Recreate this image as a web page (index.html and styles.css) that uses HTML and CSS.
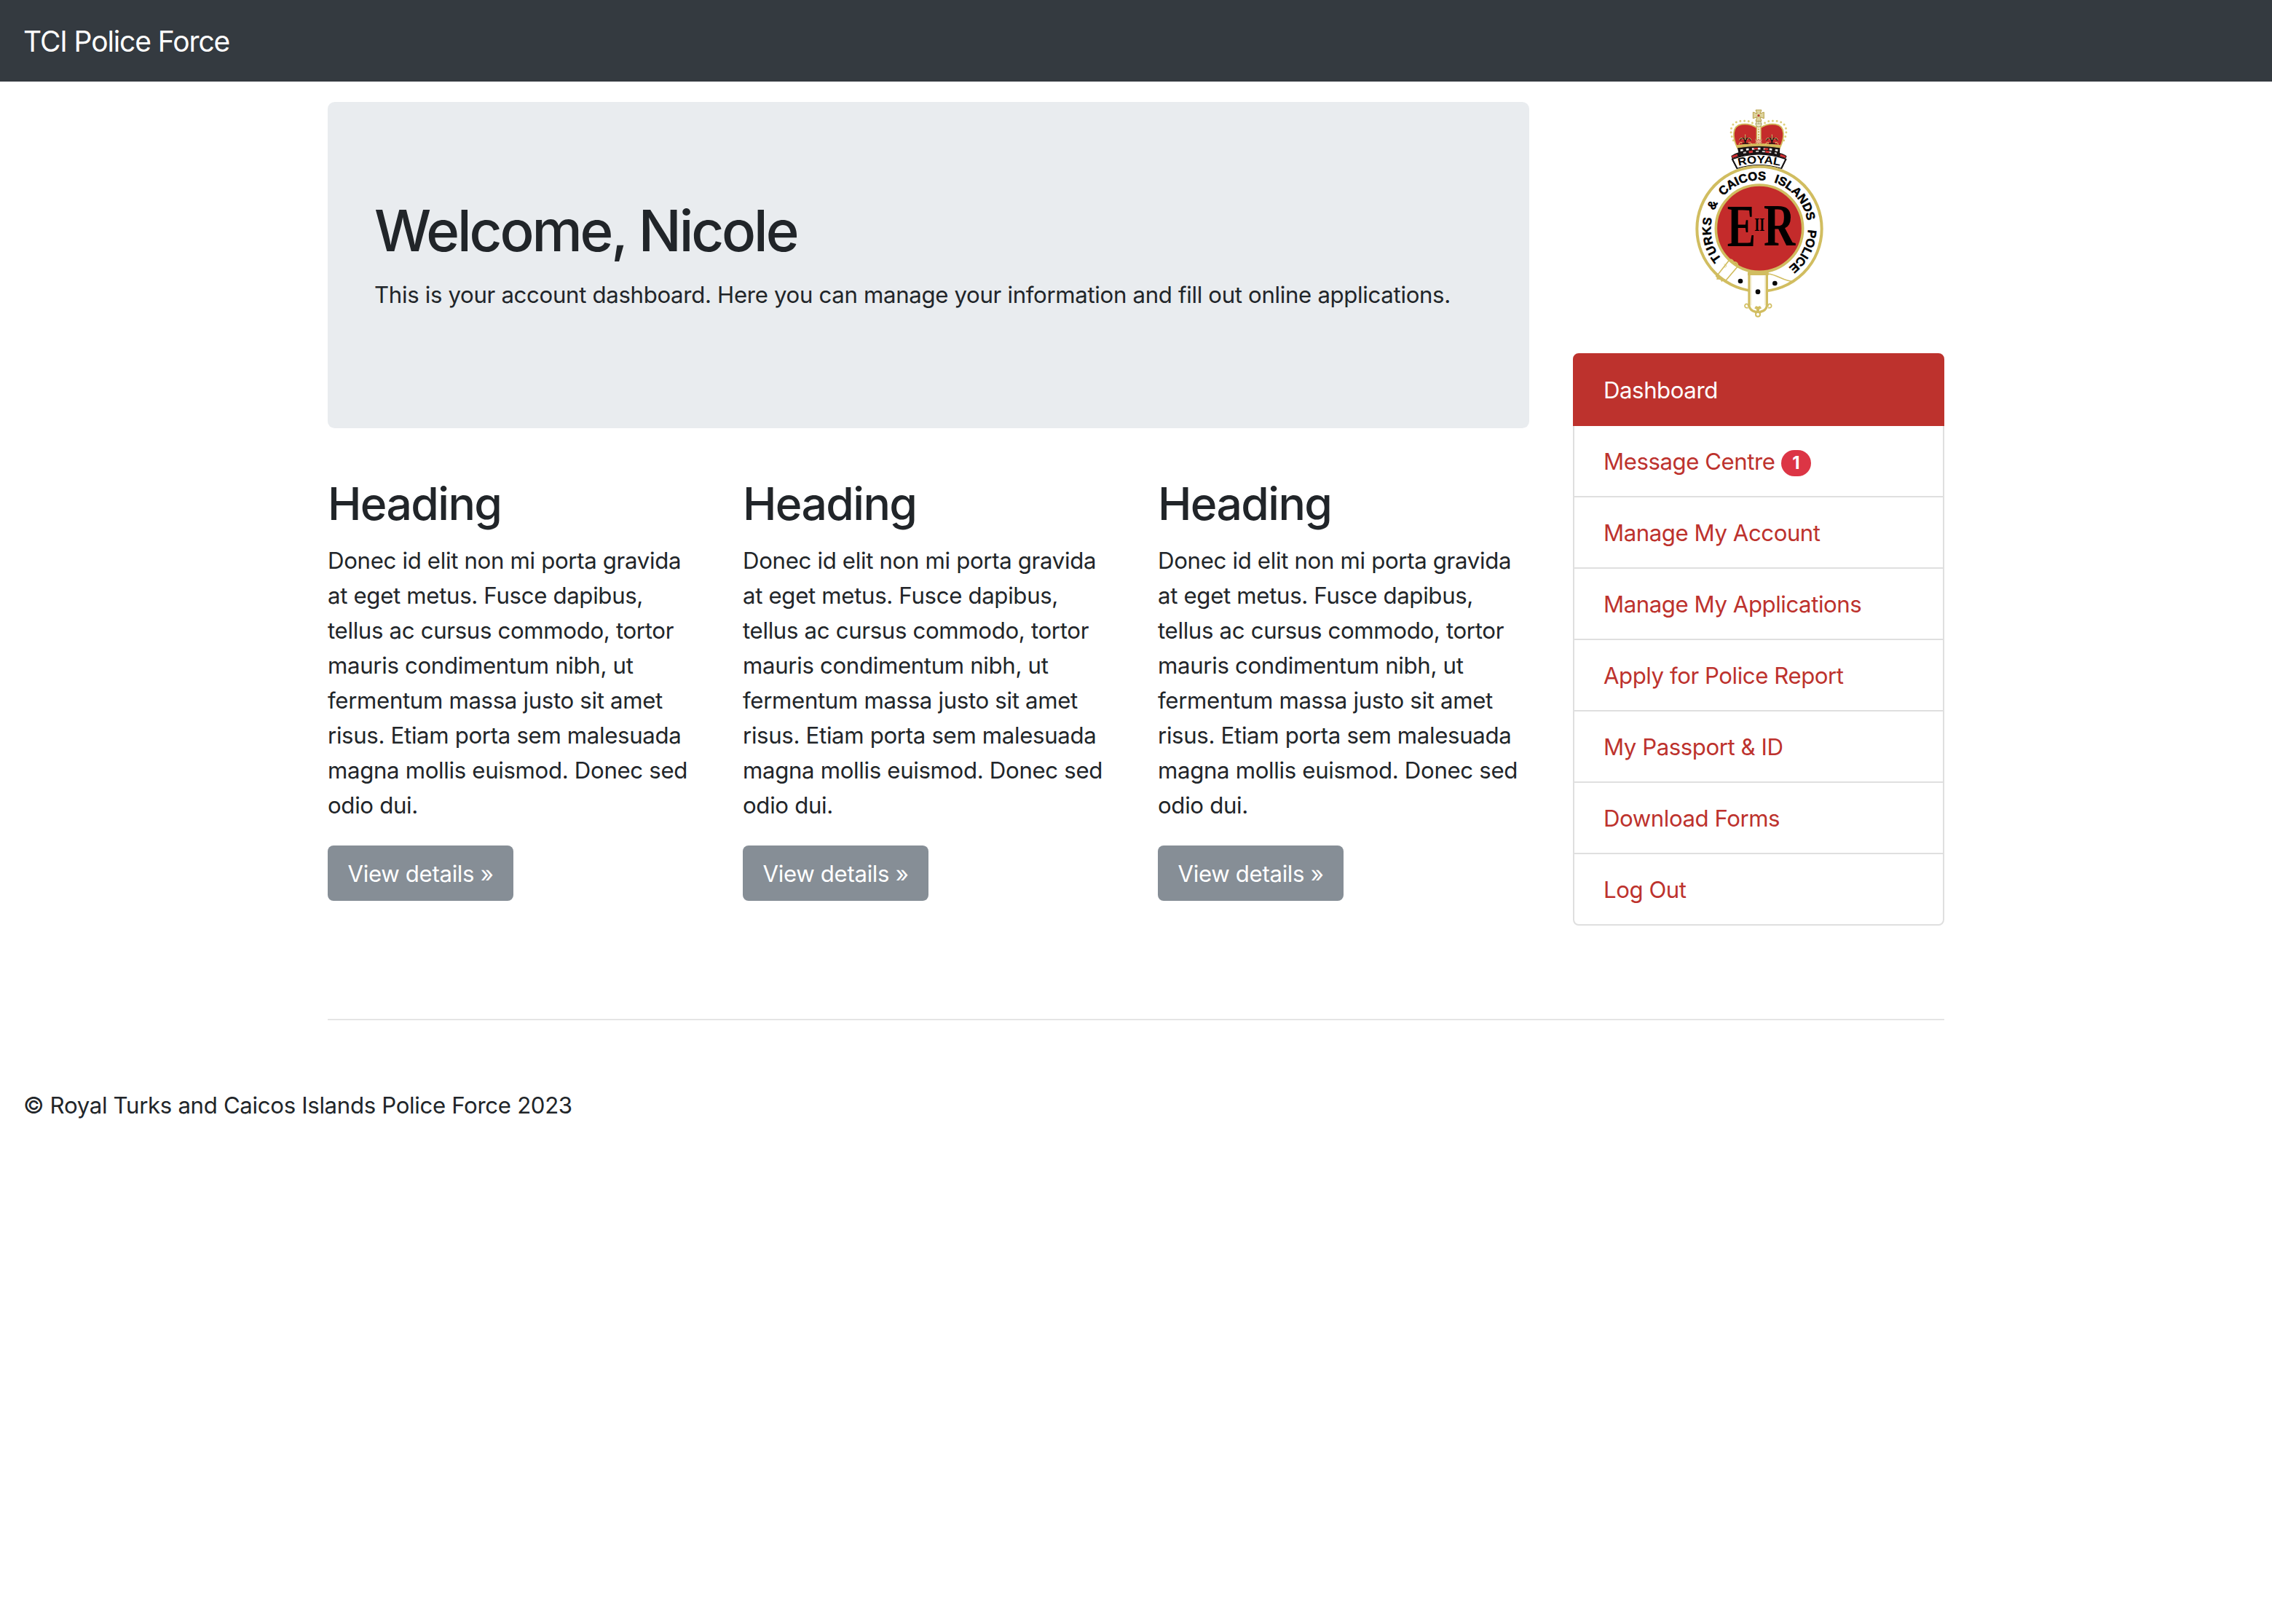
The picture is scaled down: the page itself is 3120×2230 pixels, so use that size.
FILE: index.html
```html
<!DOCTYPE html>
<html lang="en">
<head>
<meta charset="utf-8">
<title>TCI Police Force</title>
<link rel="stylesheet" href="styles.css">
</head>
<body>
<nav class="navbar"><a class="brand" href="#">TCI Police Force</a></nav>
<div class="container">
  <main class="main">
    <section class="jumbotron">
      <h1>Welcome, Nicole</h1>
      <p>This is your account dashboard. Here you can manage your information and fill out online applications.</p>
    </section>
    <div class="cards">
      <article class="card">
        <h2>Heading</h2>
        <p>Donec id elit non mi porta gravida<br>at eget metus. Fusce dapibus,<br>tellus ac cursus commodo, tortor<br>mauris condimentum nibh, ut<br>fermentum massa justo sit amet<br>risus. Etiam porta sem malesuada<br>magna mollis euismod. Donec sed<br>odio dui.</p>
        <a class="btn" href="#">View details »</a>
      </article>
      <article class="card">
        <h2>Heading</h2>
        <p>Donec id elit non mi porta gravida<br>at eget metus. Fusce dapibus,<br>tellus ac cursus commodo, tortor<br>mauris condimentum nibh, ut<br>fermentum massa justo sit amet<br>risus. Etiam porta sem malesuada<br>magna mollis euismod. Donec sed<br>odio dui.</p>
        <a class="btn" href="#">View details »</a>
      </article>
      <article class="card">
        <h2>Heading</h2>
        <p>Donec id elit non mi porta gravida<br>at eget metus. Fusce dapibus,<br>tellus ac cursus commodo, tortor<br>mauris condimentum nibh, ut<br>fermentum massa justo sit amet<br>risus. Etiam porta sem malesuada<br>magna mollis euismod. Donec sed<br>odio dui.</p>
        <a class="btn" href="#">View details »</a>
      </article>
    </div>
  </main>
  <aside class="sidebar">
    <svg class="crest" viewBox="0 30 690 900" aria-label="Royal Turks and Caicos Islands Police crest">
      <defs>
        <path id="ring" d="M348 752A200 200 0 0 1 348 352A200 200 0 0 1 348 752"/>
        <path id="scroll" d="M263 294Q347 272 437 294"/>
      </defs>
      <!-- crown -->
      <g fill="none" stroke="#dccf7c" stroke-width="9" stroke-linecap="round" stroke-dasharray="0 17">
        <path d="M241 188C222 150 230 112 270 109C300 105 322 112 330 128"/>
        <path d="M449 188C468 150 460 112 420 109C390 105 368 112 360 128"/>
      </g>
      <path d="M258 220C238 180 232 128 276 122C312 118 330 132 345 140C360 132 378 118 414 122C458 128 452 180 432 220Q345 205 258 220Z" fill="#c42b2b" stroke="#d3bd5c" stroke-width="5"/>
      <path d="M337 128h17v76h-17z" fill="#f3edcf" stroke="#d3bd5c" stroke-width="4"/>
      <path d="M345 140v58" stroke="#c8ab45" stroke-width="5" stroke-dasharray="5 6"/>
      <path d="M255 213Q345 198 435 213" fill="none" stroke="#d3bd5c" stroke-width="11"/>
      <path d="M330 182l10 7 5-7 5 7 10-7-4 11 4 9-10-5-5 5-5-5-10 5 4-9z" fill="#efb08d" stroke="#b8513c" stroke-width="2"/>
      <g fill="none" stroke="#221313" stroke-width="5">
        <path d="M290 168v32M290 198c-1-22-22-24-22-9M290 198c1-22 22-24 22-9M277 201h27"/>
        <path d="M400 168v32M400 198c-1-22-22-24-22-9M400 198c1-22 22-24 22-9M387 201h27"/>
      </g>
      <g fill="none" stroke="#e8cf76" stroke-width="3">
        <path d="M290 164v22M282 185c-5-10-14-8-16 2M298 185c5-10 14-8 16 2"/>
        <path d="M400 164v22M392 185c-5-10-14-8-16 2M408 185c5-10 14-8 16 2"/>
        <path d="M264 206q2-14 14-8M316 206q-2-14-14-8M374 206q2-14 14-8M426 206q-2-14-14-8"/>
      </g>
      <path d="M333 63h24l-6 15 16-6v26l-16-6 6 17h-24l6-17-17 6V72l17 6z" fill="#ddd39c" stroke="#b79f48" stroke-width="3"/>
      <circle cx="345" cy="86" r="5" fill="#b23a32"/>
      <circle cx="345" cy="121" r="12" fill="#eee8c6" stroke="#ab9f62" stroke-width="3"/>
      <path d="M332 120h26M345 109v12" stroke="#99945e" stroke-width="2"/>
      <path d="M258 220Q345 205 433 220L432 240Q455 246 461 254L455 265Q347 225 236 265L232 252Q244 243 262 238Z" fill="#171314"/>
      <path d="M270 230Q345 215 424 230" fill="none" stroke="#eee" stroke-width="8" stroke-dasharray="11 13"/>
      <path d="M325 222h17M368 224h17" stroke="#c42b2b" stroke-width="8"/>
      <path d="M282 240Q345 226 420 242" fill="none" stroke="#c9c7c7" stroke-width="6" stroke-dasharray="12 14"/>
      <path d="M236 257l22-8M434 249l22 8M305 237l16-3M373 234l16 3" stroke="#cc2e31" stroke-width="9"/>
      <!-- name scroll -->
      <path d="M236 266Q346 225 458 266L439 304Q347 276 256 304Z" fill="#fff" stroke="#171314" stroke-width="4"/>
      <path d="M236 264L256 303M458 264L439 303" stroke="#171314" stroke-width="6"/>
      <text class="crest-royal"><textPath href="#scroll" textLength="172" lengthAdjust="spacingAndGlyphs">ROYAL</textPath></text>
      <!-- garter -->
      <circle cx="348" cy="553" r="257" fill="#fff" stroke="#d1bd60" stroke-width="12"/>
      <circle cx="348" cy="551" r="179" fill="#c42b2b" stroke="#d1bd60" stroke-width="11"/>
      <g class="crest-ring">
        <text><textPath href="#ring" startOffset="178" textLength="181">TURKS</textPath></text>
        <text><textPath href="#ring" startOffset="390">&amp;</textPath></text>
        <text><textPath href="#ring" startOffset="460" textLength="195">CAICOS</textPath></text>
        <text><textPath href="#ring" startOffset="689" textLength="221">ISLANDS</textPath></text>
        <text><textPath href="#ring" startOffset="946" textLength="181">POLICE</textPath></text>
      </g>
      <g class="crest-cypher">
        <text x="215" y="624" textLength="118" lengthAdjust="spacingAndGlyphs">E</text>
        <text x="366" y="621" textLength="130" lengthAdjust="spacingAndGlyphs">R</text>
        <text class="crest-numeral" x="328" y="562" textLength="42" lengthAdjust="spacingAndGlyphs">II</text>
      </g>
      <!-- strap and buckle -->
      <g fill="none" stroke="#d1bd60" stroke-width="5">
        <path d="M222 684L172 748M258 709L207 769"/>
        <path d="M220 682q16-8 22 8q16-2 18 16" stroke-width="6"/>
        <path d="M168 746q10 2 8 12q14-2 18 8q8-6 16 0" stroke-width="7"/>
        <path d="M202 698q12 2 10 10q-4 6-10 1" stroke-width="2"/>
        <path d="M384 738C426 742 448 770 489 769"/>
      </g>
      <path d="M306 739V872Q312 890 331 894L342 904L354 894Q374 890 379 872V739Z" fill="#fff" stroke="#d1bd60" stroke-width="10" stroke-linejoin="round"/>
      <path d="M300 737h86" stroke="#d1bd60" stroke-width="14"/>
      <path d="M315 746V868M371 746V868" stroke="#eadfae" stroke-width="2"/>
      <g fill="none" stroke="#d1bd60" stroke-width="5">
        <path d="M302 878q-14 2-14-8q2-12 13-6q4 4-1 8M384 878q14 2 14-8q-2-12-13-6q-4 4 1 8"/>
        <path d="M342 876V896M331 875q11 8 23 0" stroke-width="12"/>
        <circle cx="342" cy="905" r="9" fill="#fff" stroke-width="6"/>
      </g>
      <g fill="#080808"><circle cx="270" cy="768" r="10"/><circle cx="412" cy="777" r="10"/><circle cx="342" cy="812" r="10"/></g>
    </svg>
    <div class="list">
      <a class="item active" href="#">Dashboard</a>
      <a class="item" href="#">Message Centre <span class="badge">1</span></a>
      <a class="item" href="#">Manage My Account</a>
      <a class="item" href="#">Manage My Applications</a>
      <a class="item" href="#">Apply for Police Report</a>
      <a class="item" href="#">My Passport &amp; ID</a>
      <a class="item" href="#">Download Forms</a>
      <a class="item" href="#">Log Out</a>
    </div>
  </aside>
</div>
<hr class="divider">
<footer class="footer"><p>© Royal Turks and Caicos Islands Police Force 2023</p></footer>
</body>
</html>
```
FILE: styles.css
```css
* { box-sizing: border-box; }
body {
  margin: 0;
  background: #fff;
  color: #212529;
  font: 400 31.2px/48px Inter, "Liberation Sans", sans-serif;
  letter-spacing: -0.33px;
}
a { color: inherit; text-decoration: none; }
h1, h2, p { margin: 0; }
.navbar {
  display: flex;
  align-items: center;
  height: 112px;
  padding: 2px 32px 0;
  background: #343a40;
  color: #fff;
}
.brand { font-size: 39px; line-height: 60px; letter-spacing: -1.1px; }
.container {
  display: grid;
  grid-template-columns: 1650px 510px;
  column-gap: 60px;
  width: 2220px;
  margin: 28px auto 0;
}
.jumbotron {
  height: 448px;
  padding: 129px 64px 0;
  border-radius: 9.6px;
  background: #e9ecef;
}
h1 { margin-bottom: 16px; font-size: 78px; font-weight: 530; line-height: 96px; letter-spacing: -3.1px; }
.cards {
  display: grid;
  grid-template-columns: repeat(3, 510px);
  column-gap: 60px;
  padding-top: 65px;
}
h2 { margin-bottom: 16px; font-size: 62.4px; font-weight: 530; line-height: 77px; letter-spacing: -1.6px; }
.card p { margin-bottom: 31px; white-space: nowrap; }
.btn {
  display: block;
  width: 255px;
  height: 76px;
  border-radius: 8px;
  background: #868e96;
  color: #fff;
  line-height: 78px;
  text-align: center;
}
.crest { display: block; width: 230px; height: 300px; margin: 0 auto 45px; }
.crest-royal { font: 700 45px "Liberation Sans", sans-serif; letter-spacing: 0; }
.crest-ring { font: 700 50px "Liberation Sans", sans-serif; letter-spacing: 0; stroke: #000; stroke-width: 1.5px; }
.crest-cypher { font: 700 250px "Liberation Serif", serif; letter-spacing: 0; }
.crest-numeral { font: 700 76px "Liberation Serif", serif; }
.list { display: flex; flex-direction: column; border-radius: 8px; letter-spacing: -0.45px; }
.item {
  height: 100px;
  margin-bottom: -2px;
  padding: 25px 40px 0;
  border: 2px solid #dfdfdf;
  color: #bd322d;
}
.item:last-child { margin-bottom: 0; border-radius: 0 0 8px 8px; }
.item.active {
  position: relative;
  border-color: #bd322d;
  border-radius: 8px 8px 0 0;
  background: #bd322d;
  color: #fff;
}
.badge {
  display: inline-block;
  width: 41px;
  height: 36px;
  border-radius: 18px;
  background: #dc3545;
  color: #fff;
  font-size: 24px;
  font-weight: 700;
  line-height: 36px;
  text-align: center;
  vertical-align: 1px;
  letter-spacing: 0;
}
.divider { width: 2220px; height: 2px; margin: 128px auto 0; border: 0; background: #e5e5e5; }
.footer { padding: 93px 32px 0; }
```
